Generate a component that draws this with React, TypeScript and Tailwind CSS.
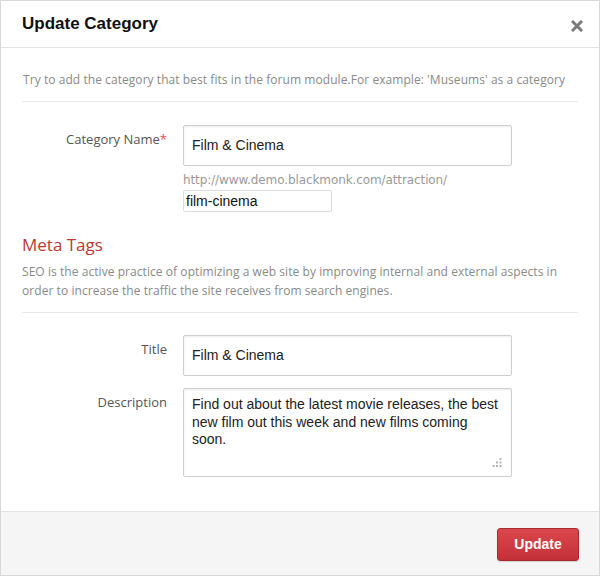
import React from 'react'

const sans = "font-['Open_Sans',sans-serif]"
const arial = "font-['Liberation_Sans',Arial,sans-serif]"

function CloseIcon() {
  return (
    <svg width="12" height="12" viewBox="0 0 12 12" aria-hidden="true">
      <path d="M2 2 L10 10 M10 2 L2 10" stroke="#7b7b7b" strokeWidth="3" strokeLinecap="square" />
    </svg>
  )
}

function ResizeGrip() {
  return (
    <svg width="10" height="10" viewBox="0 0 10 10" aria-hidden="true">
      <g fill="#b3b3b3">
        <rect x="7.5" y="0" width="2" height="2" />
        <rect x="4" y="3.5" width="2" height="2" />
        <rect x="7.5" y="3.5" width="2" height="2" />
        <rect x="0.5" y="7" width="2" height="2" />
        <rect x="4" y="7" width="2" height="2" />
        <rect x="7.5" y="7" width="2" height="2" />
      </g>
    </svg>
  )
}

function Field({ label, required, children }: { label: string; required?: boolean; children: React.ReactNode }) {
  return (
    <div className="flex items-start gap-4">
      <label className={`${sans} w-[145px] shrink-0 text-right text-[13px] leading-[19px] text-[#555] mt-[5px]`}>
        {label}
        {required && <span className="text-[#d9534f]">*</span>}
      </label>
      <div className="flex-1">{children}</div>
    </div>
  )
}

function TextBox({ value }: { value: string }) {
  return (
    <div
      className={`${arial} w-[329px] h-[41px] flex items-center px-[8px] border border-[#cfcfcf] rounded-[2px] bg-white text-[14px] text-[#222] shadow-[inset_0_1px_2px_rgba(0,0,0,0.08)]`}
    >
      {value}
    </div>
  )
}

export default function App() {
  return (
    <div className="w-[600px] h-[576px] bg-white border border-[#d8d8d8] flex flex-col">
      <div className="h-[47px] shrink-0 border-b border-[#e3e3e3] pl-[21px] pr-[12px] flex items-center justify-between">
        <h2 className={`${arial} text-[17px] font-bold text-[#111]`}>Update Category</h2>
        <button className="p-1 mt-[3px]">
          <CloseIcon />
        </button>
      </div>

      <div className="flex-1 px-[21px] pt-[22px]">
        <p className={`${sans} text-[12px] tracking-[0.06px] leading-[19px] text-[#8a8a8a] pl-[1px]`}>
          Try to add the category that best fits in the forum module.For example: 'Museums' as a category
        </p>
        <div className="mt-[12px] h-px bg-[#e8e8e8]" />

        <div className="mt-[23px]">
          <Field label="Category Name" required>
            <TextBox value="Film & Cinema" />
            <div className="mt-[7px] font-['DejaVu_Sans',sans-serif] text-[12px] tracking-[-0.1px] leading-[14px] text-[#9a9a9a]">
              http://www.demo.blackmonk.com/attraction/
            </div>
            <div
              className={`${arial} mt-[3px] w-[149px] h-[22px] flex items-center px-[2px] border border-[#dedede] rounded-[2px] text-[14px] text-[#111]`}
            >
              film-cinema
            </div>
          </Field>
        </div>

        <h3 className={`${sans} mt-[22px] text-[17px] leading-[22px] text-[#b93a35]`}>Meta Tags</h3>
        <p className={`${sans} mt-[6px] text-[12px] tracking-[0.06px] leading-[19px] text-[#8a8a8a]`}>
          SEO is the active practice of optimizing a web site by improving internal and external aspects in
          <br />
          order to increase the traffic the site receives from search engines.
        </p>
        <div className="mt-[12px] h-px bg-[#e8e8e8]" />

        <div className="mt-[22px] flex flex-col gap-3">
          <Field label="Title">
            <TextBox value="Film & Cinema" />
          </Field>
          <Field label="Description">
            <div
              className={`${arial} relative w-[329px] h-[89px] px-[8px] pt-[7px] border border-[#cfcfcf] rounded-[2px] bg-white text-[14px] leading-[17.5px] text-[#222] shadow-[inset_0_1px_2px_rgba(0,0,0,0.08)]`}
            >
              Find out about the latest movie releases, the best
              <br />
              new film out this week and new films coming
              <br />
              soon.
              <span className="absolute right-[9px] bottom-[8px] flex">
                <ResizeGrip />
              </span>
            </div>
          </Field>
        </div>
      </div>

      <div className="h-[64px] shrink-0 border-t border-[#e3e3e3] bg-[#f5f5f5] flex items-start justify-end pr-[20px] pt-[16px]">
        <button
          className={`${arial} w-[82px] h-[33px] rounded-[3px] border border-[#a9292e] bg-gradient-to-b from-[#d9464b] to-[#c5313a] text-white text-[14px] font-bold shadow-[0_1px_1px_rgba(0,0,0,0.15)]`}
        >
          Update
        </button>
      </div>
    </div>
  )
}
